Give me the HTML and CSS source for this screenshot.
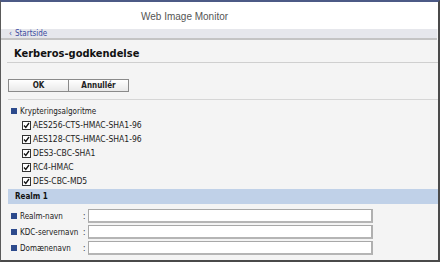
FILE: index.html
```html
<!DOCTYPE html>
<html>
<head>
<meta charset="utf-8">
<link rel="stylesheet" href="styles.css">
</head>
<body>
<div class="window">
  <div class="header">Web Image Monitor</div>
  <div class="crumb"><span class="arr">&#8249;</span>Startside</div>
  <div class="content">
    <h1 class="title">Kerberos-godkendelse</h1>
    <div class="buttons">
      <button class="btn">OK</button><button class="btn">Annullér</button>
    </div>
    <div class="section">
      <div class="label"><span class="sq"></span>Krypteringsalgoritme</div>
      <ul class="checks">
        <li><span class="cb"><svg width="9" height="9" viewBox="0 0 9 9"><rect x="0.5" y="0.5" width="8" height="8" fill="#fff" stroke="#333"/><path d="M2 4.5 L3.8 6.5 L7 2" fill="none" stroke="#111" stroke-width="1.3"/></svg></span>AES256-CTS-HMAC-SHA1-96</li>
        <li><span class="cb"><svg width="9" height="9" viewBox="0 0 9 9"><rect x="0.5" y="0.5" width="8" height="8" fill="#fff" stroke="#333"/><path d="M2 4.5 L3.8 6.5 L7 2" fill="none" stroke="#111" stroke-width="1.3"/></svg></span>AES128-CTS-HMAC-SHA1-96</li>
        <li><span class="cb"><svg width="9" height="9" viewBox="0 0 9 9"><rect x="0.5" y="0.5" width="8" height="8" fill="#fff" stroke="#333"/><path d="M2 4.5 L3.8 6.5 L7 2" fill="none" stroke="#111" stroke-width="1.3"/></svg></span>DES3-CBC-SHA1</li>
        <li><span class="cb"><svg width="9" height="9" viewBox="0 0 9 9"><rect x="0.5" y="0.5" width="8" height="8" fill="#fff" stroke="#333"/><path d="M2 4.5 L3.8 6.5 L7 2" fill="none" stroke="#111" stroke-width="1.3"/></svg></span>RC4-HMAC</li>
        <li><span class="cb"><svg width="9" height="9" viewBox="0 0 9 9"><rect x="0.5" y="0.5" width="8" height="8" fill="#fff" stroke="#333"/><path d="M2 4.5 L3.8 6.5 L7 2" fill="none" stroke="#111" stroke-width="1.3"/></svg></span>DES-CBC-MD5</li>
      </ul>
    </div>
    <div class="realm">Realm 1</div>
    <div class="fields">
      <div class="field"><span class="flabel"><span class="sq"></span>Realm-navn</span><span class="colon">:</span><span class="input"></span></div>
      <div class="field"><span class="flabel"><span class="sq"></span>KDC-servernavn</span><span class="colon">:</span><span class="input"></span></div>
      <div class="field"><span class="flabel"><span class="sq"></span>Domænenavn</span><span class="colon">:</span><span class="input"></span></div>
    </div>
  </div>
</div>
</body>
</html>
```
FILE: styles.css
```css
html, body { margin: 0; padding: 0; }
body { width: 440px; height: 262px; overflow: hidden; background: #fff; font-family: "DejaVu Sans Condensed", "DejaVu Sans", Verdana, sans-serif; }
.window {
  box-sizing: border-box;
  width: 440px; height: 262px;
  border-top: 2px solid #4c5a86;
  border-left: 1px solid #5a5a5a;
  border-right: 2px solid #4a4a4a;
  border-bottom: 2px solid #4a4a4a;
  display: flex; flex-direction: column;
  background: #f4f4f4;
}
.header {
  height: 27px; background: #fff;
  font-family: "Liberation Sans", Arial, sans-serif;
  font-size: 10px; color: #555;
  padding-left: 140px; line-height: 30px;
}
.crumb {
  height: 9px; background: #e6e7ec;
  font-size: 8px; line-height: 9px; color: #3a4aa0;
  padding-left: 8px; margin-right: 1px;
  border-bottom: 2px solid #c4c4c4;
}
.crumb .arr { font-size: 8px; margin-right: 3px; }
.content { flex: 1; }
.title {
  margin: 0 0 0 6px; font-size: 11px; font-weight: bold; color: #111;
  padding: 7px 0 0 7px; height: 15px;
  border-bottom: 1px solid #cfcfcf;
}
.buttons { margin: 16px 0 0 7px; display: flex; padding-bottom: 7px; border-bottom: 1px solid #d6d6d6; }
.btn {
  width: 61px; height: 13px; padding: 0; margin: 0;
  font-family: "DejaVu Sans Condensed", "DejaVu Sans", Verdana, sans-serif; font-size: 8px; font-weight: bold; color: #222;
  background: linear-gradient(#ffffff, #e9e9e9);
  border: 1px solid #8a8a8a; border-radius: 0;
}
.btn + .btn { margin-left: -1px; }
.section { padding: 5px 0 0 10px; font-size: 8px; color: #222; }
.label { display: flex; align-items: center; height: 12px; }
.sq { display: inline-block; width: 6px; height: 6px; background: #2c4a8c; margin-right: 3px; flex: none; }
.checks { list-style: none; margin: 1px 0 0 11px; padding: 0; font-size: 8.5px; }
.checks li { display: flex; align-items: center; height: 14px; }
.cb { display: inline-flex; margin-right: 2px; }
.realm {
  margin: 1px 0 0 7px; height: 15px; background: #c0d1e8;
  font-size: 8px; font-weight: bold; color: #111; line-height: 15px; padding-left: 7px;
}
.fields { padding: 4px 0 0 10px; font-size: 8px; color: #222; display: flex; flex-direction: column; }
.field { display: flex; align-items: center; height: 16px; }
.flabel { width: 72px; display: flex; align-items: center; }
.colon { width: 5px; }
.input { width: 285px; height: 14px; background: #fff; border: 1px solid #a8a8a8; border-bottom: 2px solid #b5b5b5; border-right: 2px solid #b0b0b0; box-sizing: border-box; }
```
